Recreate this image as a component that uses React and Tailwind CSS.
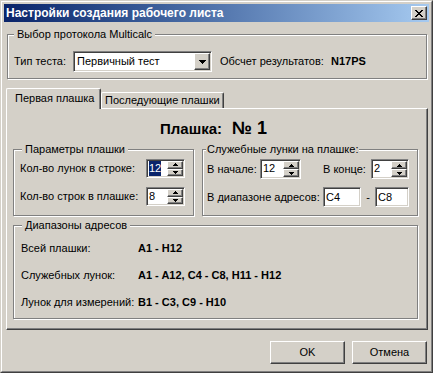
import React from "react";

const raised =
  "border border-t-white border-l-white border-r-[#404040] border-b-[#404040] shadow-[inset_-1px_-1px_0_#808080]";
const sunken =
  "border border-t-[#808080] border-l-[#808080] border-r-white border-b-white shadow-[inset_1px_1px_0_#404040,inset_-1px_-1px_0_#d4d0c8] p-[1px]";
const etched = "border border-[#808080] shadow-[1px_1px_0_#fff,inset_1px_1px_0_#fff]";

function Group({ title, legendClass, className, children }) {
  return (
    <div className={`relative ${etched} ${className}`}>
      <span className={`absolute -top-[7px] bg-[#d4d0c8] leading-[13px] ${legendClass}`}>{title}</span>
      {children}
    </div>
  );
}

function UpArrow() {
  return (
    <svg width="5" height="3" viewBox="0 0 5 3" shapeRendering="crispEdges">
      <rect x="2" y="0" width="1" height="1" fill="#000" />
      <rect x="1" y="1" width="3" height="1" fill="#000" />
      <rect x="0" y="2" width="5" height="1" fill="#000" />
    </svg>
  );
}

function DownArrow({ big }) {
  if (big) {
    return (
      <svg width="7" height="4" viewBox="0 0 7 4" shapeRendering="crispEdges">
        <rect x="0" y="0" width="7" height="1" fill="#000" />
        <rect x="1" y="1" width="5" height="1" fill="#000" />
        <rect x="2" y="2" width="3" height="1" fill="#000" />
        <rect x="3" y="3" width="1" height="1" fill="#000" />
      </svg>
    );
  }
  return (
    <svg width="5" height="3" viewBox="0 0 5 3" shapeRendering="crispEdges">
      <rect x="0" y="0" width="5" height="1" fill="#000" />
      <rect x="1" y="1" width="3" height="1" fill="#000" />
      <rect x="2" y="2" width="1" height="1" fill="#000" />
    </svg>
  );
}

function Spin({ value, selected, className }) {
  return (
    <div className={`flex bg-white ${sunken} ${className}`}>
      <div className="flex-1 pl-[1px]">
        <span className={`inline-block h-full leading-[15px] ${selected ? "bg-[#0a246a] text-white" : ""}`}>
          {value}
        </span>
      </div>
      <div className="flex flex-col w-[16px]">
        <div className={`flex-1 flex items-center justify-center bg-[#d4d0c8] ${raised}`}>
          <UpArrow />
        </div>
        <div className={`flex-1 flex items-center justify-center bg-[#d4d0c8] ${raised}`}>
          <DownArrow />
        </div>
      </div>
    </div>
  );
}

function Edit({ value, className }) {
  return (
    <div className={`bg-white pl-[2px] leading-[16px] ${sunken} ${className}`}>{value}</div>
  );
}

function CloseGlyph() {
  const px = [
    [0, 0, 2], [6, 0, 2],
    [1, 1, 2], [5, 1, 2],
    [2, 2, 4],
    [3, 3, 2],
    [2, 4, 4],
    [1, 5, 2], [5, 5, 2],
    [0, 6, 2], [6, 6, 2],
  ];
  return (
    <svg width="8" height="7" viewBox="0 0 8 7" shapeRendering="crispEdges">
      {px.map(([x, y, w], i) => (
        <rect key={i} x={x} y={y} width={w} height="1" fill="#000" />
      ))}
    </svg>
  );
}

export default function App() {
  return (
    <div className="w-[433px] h-[373px] bg-[#d4d0c8] font-['Liberation_Sans',Arial,sans-serif] text-[11px] leading-[13px] text-black border border-t-[#d4d0c8] border-l-[#d4d0c8] border-r-[#404040] border-b-[#404040]">
      <div className="h-full flex flex-col p-[2px] border border-t-white border-l-white border-r-[#808080] border-b-[#808080]">
        {/* title bar */}
        <div className="flex h-[18px] shrink-0 items-center justify-between bg-linear-to-r from-[#0a246a] to-[#a6caf0] pl-[2px] pr-[2px]">
          <span className="text-[12px] font-bold text-white">Настройки создания рабочего листа</span>
          <div className={`flex w-[16px] h-[14px] items-center justify-center bg-[#d4d0c8] ${raised}`}>
            <CloseGlyph />
          </div>
        </div>

        <div className="flex flex-col">
          {/* protocol */}
          <Group
            title="Выбор протокола Multicalc"
            legendClass="left-[6px] px-[3px]"
            className="mt-[12px] ml-[3px] w-[420px] h-[45px]"
          >
            <div className="flex items-center h-[21px] mt-[16px] pl-[6px]">
              <span className="w-[59px]">Тип теста:</span>
              <div className={`flex w-[139px] h-[21px] bg-white ${sunken}`}>
                <span className="flex-1 pl-[2px] leading-[17px]">Первичный тест</span>
                <div className={`flex w-[16px] items-center justify-center bg-[#d4d0c8] ${raised}`}>
                  <DownArrow big />
                </div>
              </div>
              <span className="ml-[8px] w-[111px]">Обсчет результатов:</span>
              <span className="font-bold">N17PS</span>
            </div>
          </Group>

          {/* tabs */}
          <div className="flex items-end h-[20px] mt-[9px] ml-[2px]">
            <div className="relative z-10 -mb-[1px] h-[21px] w-[95px] bg-[#d4d0c8] border-l border-t border-r border-l-white border-t-white border-r-[#404040] rounded-t-[2px] shadow-[inset_-1px_0_0_#808080] pl-[8px] pt-[3px]">
              Первая плашка
            </div>
            <div className="h-[16px] w-[123px] bg-[#d4d0c8] border-l border-t border-r border-l-white border-t-white border-r-[#404040] rounded-t-[2px] shadow-[inset_-1px_0_0_#808080] pl-[3px] pt-[1px]">
              Последующие плашки
            </div>
          </div>

          {/* panel */}
          <div className={`flex flex-col ml-[2px] w-[422px] h-[222px] pl-[6px] pt-[11px] ${raised}`}>
            <div className="flex h-[17px] items-center font-bold ml-[147px]">
              <span className="w-[72px] text-[15px]">Плашка:</span>
              <span className="text-[18px]">№ 1</span>
            </div>

            <div className="flex mt-[12px]">
              <Group
                title="Параметры плашки"
                legendClass="left-[8px] px-[3px]"
                className="w-[181px] h-[67px]"
              >
                <div className="flex flex-col pt-[9px] pl-[6px] pr-[8px] gap-[9px]">
                  <div className="flex items-center h-[19px]">
                    <span>Кол-во лунок в строке:</span>
                    <Spin value="12" selected className="ml-auto w-[39px] h-[19px]" />
                  </div>
                  <div className="flex items-center h-[19px]">
                    <span>Кол-во строк в плашке:</span>
                    <Spin value="8" className="ml-auto w-[39px] h-[19px]" />
                  </div>
                </div>
              </Group>

              <Group
                title="Служебные лунки на плашке:"
                legendClass="left-[3px] px-[1px]"
                className="ml-[8px] w-[216px] h-[67px]"
              >
                <div className="flex flex-col pt-[9px] pl-[4px] gap-[8px]">
                  <div className="flex items-center h-[20px]">
                    <span className="w-[53px]">В начале:</span>
                    <Spin value="12" className="w-[41px] h-[20px]" />
                    <span className="ml-[22px] w-[48px]">В конце:</span>
                    <Spin value="2" className="w-[38px] h-[20px]" />
                  </div>
                  <div className="flex items-center h-[20px]">
                    <span className="w-[116px]">В диапазоне адресов:</span>
                    <Edit value="C4" className="w-[38px] h-[20px]" />
                    <span className="w-[14px] text-center">-</span>
                    <Edit value="C8" className="w-[34px] h-[20px]" />
                  </div>
                </div>
              </Group>
            </div>

            <Group
              title="Диапазоны адресов"
              legendClass="left-[8px] px-[3px]"
              className="mt-[9px] w-[405px] h-[94px]"
            >
              <div className="flex flex-col pt-[16px] pl-[7px] gap-[14px]">
                <div className="flex">
                  <span className="w-[117px]">Всей плашки:</span>
                  <span className="font-bold">A1 - H12</span>
                </div>
                <div className="flex">
                  <span className="w-[117px]">Служебных лунок:</span>
                  <span className="font-bold">A1 - A12, C4 - C8, H11 - H12</span>
                </div>
                <div className="flex">
                  <span className="w-[117px]">Лунок для измерений:</span>
                  <span className="font-bold">B1 - C3, C9 - H10</span>
                </div>
              </div>
            </Group>
          </div>

          {/* buttons */}
          <div className="flex justify-end gap-[7px] mt-[11px] pr-[2px]">
            <button className={`w-[75px] h-[23px] bg-[#d4d0c8] ${raised}`}>OK</button>
            <button className={`w-[75px] h-[23px] bg-[#d4d0c8] ${raised}`}>Отмена</button>
          </div>
        </div>
      </div>
    </div>
  );
}
